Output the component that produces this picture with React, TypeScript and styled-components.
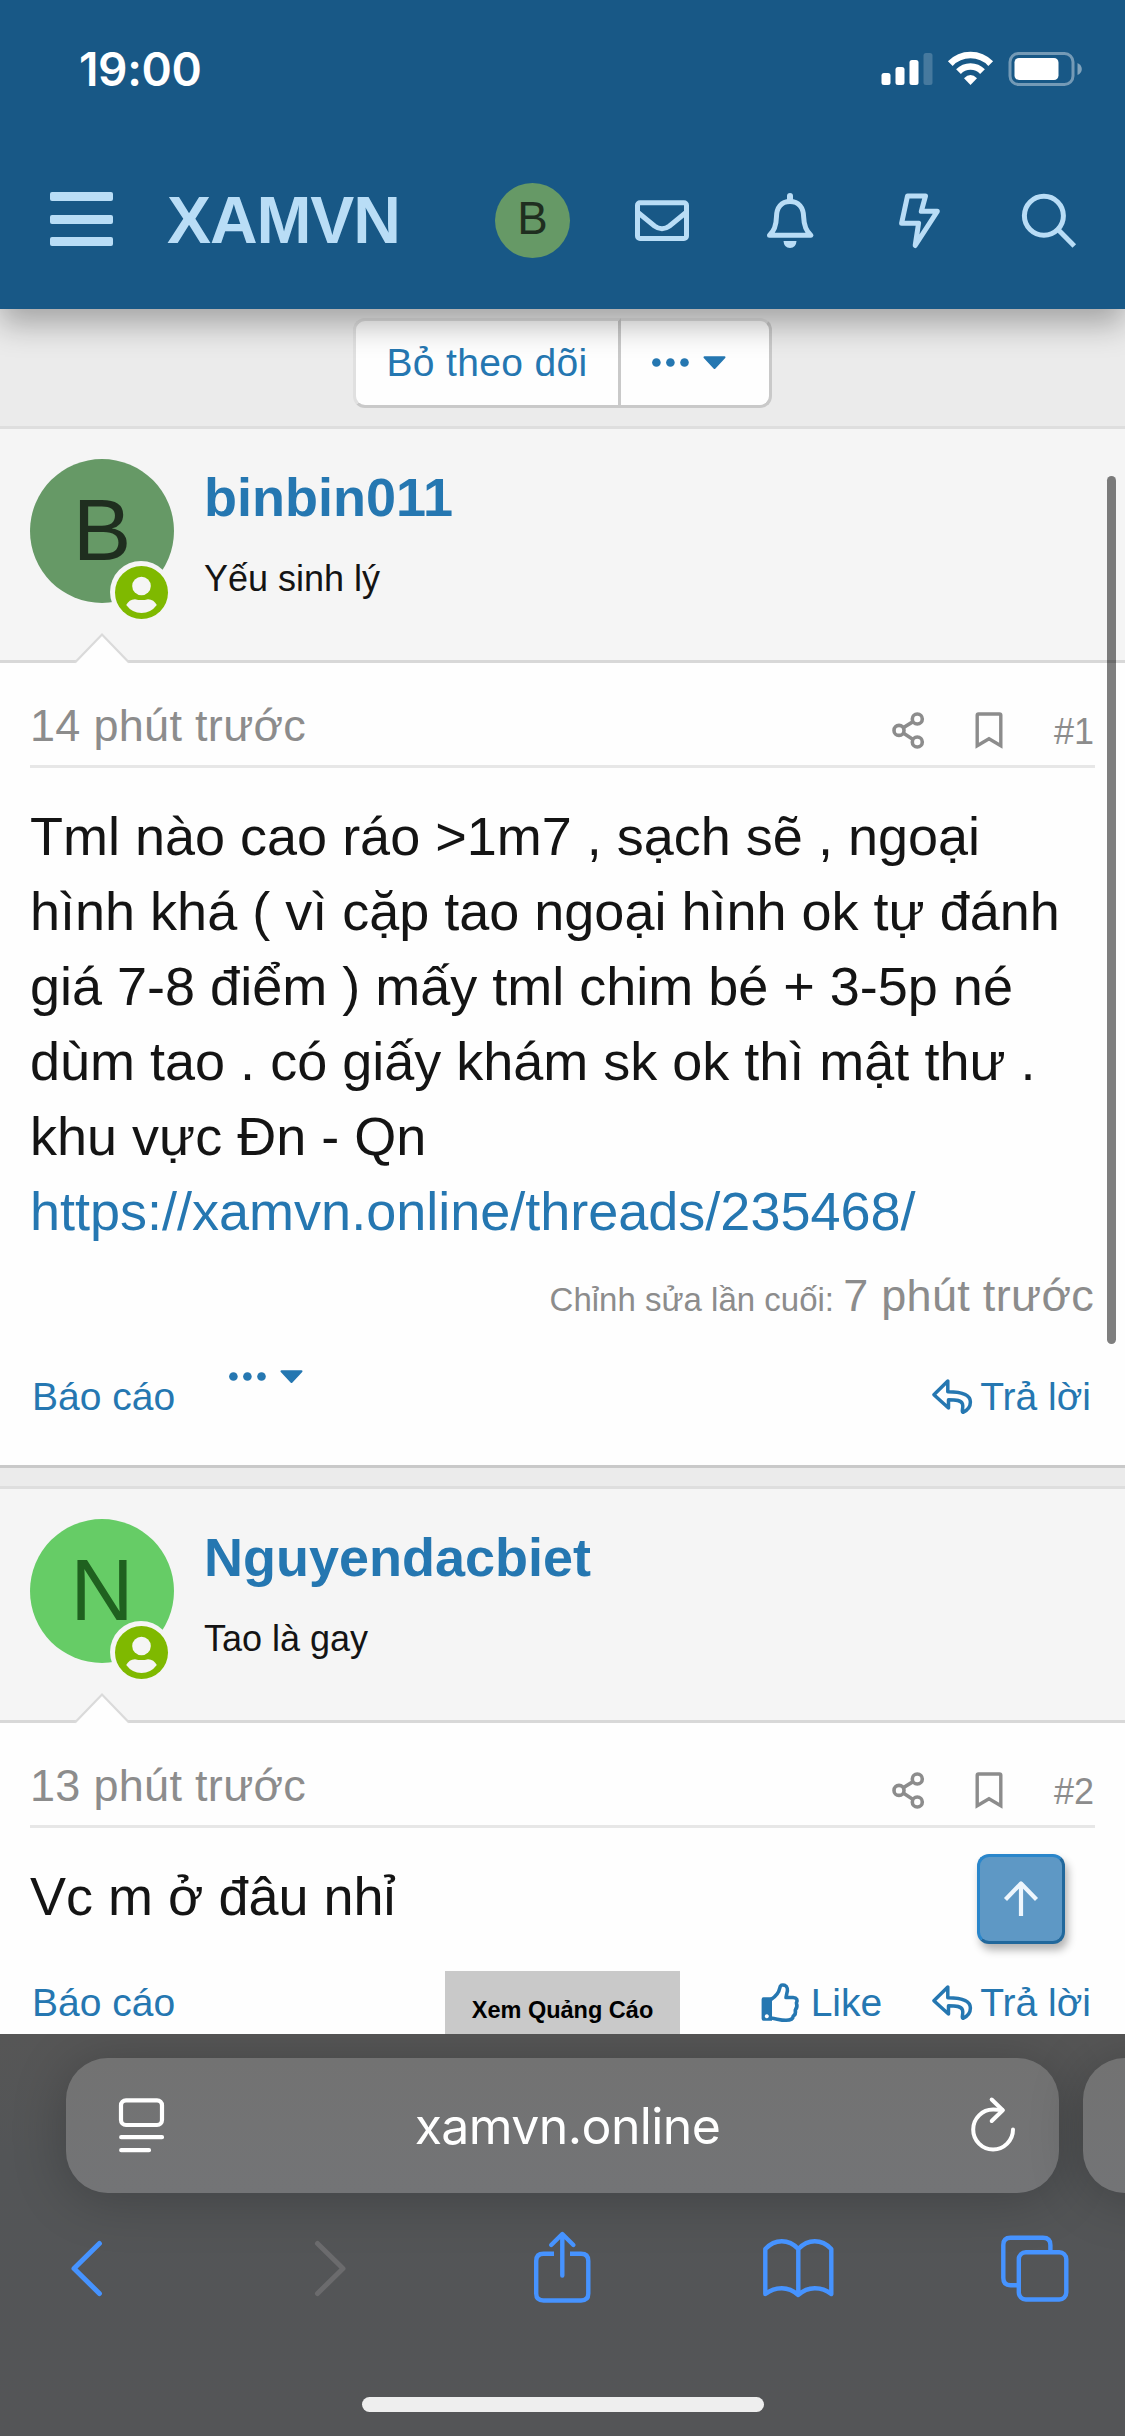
import React from "react";
import styled, { createGlobalStyle } from "styled-components";

const GlobalStyle = createGlobalStyle`
  html, body { margin: 0; padding: 0; }
  body { font-family: "Liberation Sans", Arial, sans-serif; background: #ebebeb; }
  *, *::before, *::after { box-sizing: border-box; }
  svg { display: block; flex: none; overflow: visible; }
`;

const LINK = "#2577b1";
const MUTED = "#8c8c8c";
const PALE = "#b9ddf6";
const IOS_BLUE = "#4693ff";

const Screen = styled.div`
  width: 1125px;
  height: 2436px;
  display: flex;
  flex-direction: column;
  overflow: hidden;
`;

/* ---------- site header ---------- */
const Header = styled.header`
  position: relative;
  z-index: 3;
  height: 309px;
  flex: none;
  background: #185886;
  box-shadow: 0 15px 30px rgba(0, 0, 0, 0.3);
`;

const StatusBar = styled.div`
  height: 138px;
  display: flex;
  justify-content: space-between;
  align-items: center;
  padding: 0 43px 0 79px;
`;

const Clock = styled.span`
  font: 600 46px/54px Inter, "Liberation Sans", sans-serif;
  letter-spacing: -0.35px;
  color: #fff;
`;

const NavBar = styled.nav`
  height: 171px;
  display: flex;
  align-items: flex-start;
  padding: 45px 12px 0 50px;
`;

const Burger = styled.button`
  width: 63px;
  height: 54px;
  margin-top: 9px;
  padding: 0;
  border: 0;
  background: none;
  display: flex;
  flex-direction: column;
  justify-content: space-between;
`;

const BurgerBar = styled.span`
  width: 63px;
  height: 9px;
  border-radius: 2px;
  background: ${PALE};
`;

const Logo = styled.a`
  margin-left: 54px;
  font-size: 66px;
  line-height: 75px;
  font-weight: 700;
  letter-spacing: -1.1px;
  color: ${PALE};
`;

const NavIcons = styled.div`
  display: grid;
  grid-template-columns: repeat(5, 129px);
  margin-left: auto;
`;

const NavSlot = styled.a`
  height: 75px;
  display: flex;
  align-items: center;
  justify-content: center;
`;

const Avatar = styled.span<{ $size: number; $bg: string; $fg: string }>`
  width: ${(p) => p.$size}px;
  height: ${(p) => p.$size}px;
  border-radius: 50%;
  background: ${(p) => p.$bg};
  color: ${(p) => p.$fg};
  font-size: ${(p) => p.$size * 0.61}px;
  line-height: ${(p) => p.$size - 3}px;
  text-align: center;
  flex: none;
`;

/* ---------- thread ---------- */
const Thread = styled.main`
  position: relative;
  flex: 1;
  min-height: 0;
  overflow: hidden;
  background: #ebebeb;
`;

const Actions = styled.div`
  height: 117px;
  padding: 9px 0 0 353px;
  display: flex;
`;

const ActionButton = styled.button<{ $width: number; $side: "left" | "right" }>`
  width: ${(p) => p.$width}px;
  height: 90px;
  padding: 0 ${(p) => (p.$side === "left" ? 0 : 12)}px 0 0;
  border: 3px solid;
  border-color: #e0e0e0 #c9c9c9 #c9c9c9 #e0e0e0;
  border-left-width: ${(p) => (p.$side === "left" ? 3 : 0)}px;
  border-radius: ${(p) => (p.$side === "left" ? "12px 0 0 12px" : "0 12px 12px 0")};
  background: #fefefe;
  color: ${LINK};
  font: 39px/84px "Liberation Sans", Arial, sans-serif;
  letter-spacing: 0.35px;
  display: flex;
  align-items: center;
  justify-content: center;
`;

const Post = styled.article`
  border-top: 3px solid #dedede;
  border-bottom: 3px solid #c9c9c9;
  margin-bottom: 18px;
  background: #fefefe;
`;

const UserCell = styled.section`
  position: relative;
  height: 234px;
  display: flex;
  gap: 30px;
  padding: 30px 30px 0;
  background: #f5f5f5;
  border-bottom: 3px solid #d8d8d8;
`;

const AvatarWrap = styled.div`
  position: relative;
  width: 144px;
  height: 144px;
  display: flex;
`;

const OnlineBadge = styled.span`
  position: absolute;
  left: 80px;
  top: 102px;
  width: 62px;
  height: 62px;
  padding: 4.5px;
  border-radius: 50%;
  background: #f5f5f5;
`;

const UserText = styled.div`
  display: flex;
  flex-direction: column;
`;

const UserName = styled.h4<{ $tracking: number }>`
  margin: 7px 0 0;
  font-size: 54px;
  line-height: 63px;
  font-weight: 700;
  letter-spacing: ${(p) => p.$tracking}px;
  color: ${LINK};
`;

const UserTitle = styled.h5<{ $tracking: number }>`
  margin: 24px 0 0;
  font-size: 36px;
  line-height: 51px;
  font-weight: 400;
  letter-spacing: ${(p) => p.$tracking}px;
  color: #141414;
`;

const Notch = styled.span`
  position: absolute;
  left: 72px;
  bottom: -3px;
`;

const Attribution = styled.header`
  height: 105px;
  margin: 0 30px;
  border-bottom: 3px solid #e7e7e7;
  display: flex;
  align-items: flex-start;
  color: ${MUTED};
`;

const PostTime = styled.time`
  margin-top: 16px;
  font-size: 45px;
  line-height: 93px;
  letter-spacing: 0.3px;
`;

const PostTools = styled.div`
  margin: 49px 0 0 auto;
  display: flex;
  align-items: flex-start;
`;

const ToolIcon = styled.a<{ $width: number }>`
  width: ${(p) => p.$width}px;
`;

const PostNumber = styled.a`
  width: 41px;
  font-size: 36px;
  line-height: 39px;
`;

const Message = styled.div`
  padding: 31px 0 0 30px;
  font-size: 54px;
  line-height: 75px;
  color: #141414;
`;

const Line = styled.div<{ $tracking?: number }>`
  white-space: nowrap;
  letter-spacing: ${(p) => p.$tracking ?? 0}px;
`;

const Link = styled.a`
  color: ${LINK};
`;

const LastEdit = styled.div`
  margin: 17px 31px 0 0;
  height: 60px;
  line-height: 60px;
  text-align: right;
  font-size: 33px;
  color: ${MUTED};
`;

const EditTime = styled.time`
  font-size: 45px;
  letter-spacing: 0.3px;
`;

const PostFooter = styled.footer<{ $gap: number }>`
  margin-top: ${(p) => p.$gap}px;
  height: 95px;
  padding: 0 34px 0 32px;
  display: flex;
  align-items: flex-start;
  font-size: 39px;
  line-height: 54px;
  color: ${LINK};
`;

const FooterLink = styled.a<{ $indent?: number; $gap?: number }>`
  display: flex;
  align-items: center;
  margin-left: ${(p) => p.$indent ?? 0}px;
  gap: ${(p) => p.$gap ?? 0}px;
`;

const FooterRight = styled.div`
  display: flex;
  gap: 50px;
  margin-left: auto;
`;

const ScrollThumb = styled.div`
  position: absolute;
  right: 9px;
  top: 167px;
  width: 9px;
  height: 868px;
  border-radius: 5px;
  background: rgba(0, 0, 0, 0.5);
`;

const AdButton = styled.button`
  position: absolute;
  left: 445px;
  bottom: 0;
  width: 235px;
  height: 63px;
  padding: 14px 0 0;
  border: 0;
  background: #c9c9c9;
  color: #000;
  font: 700 23.5px/50px "Liberation Sans", Arial, sans-serif;
  text-align: center;
  white-space: nowrap;
`;

const TopButton = styled.button`
  position: absolute;
  left: 977px;
  top: 1545px;
  width: 88px;
  height: 90px;
  padding: 0;
  display: flex;
  align-items: center;
  justify-content: center;
  background: #5e98c5;
  border: 3px solid;
  border-color: #2a86cb #21689c #21689c #2a86cb;
  border-radius: 12px;
  box-shadow: 3px 6px 9px rgba(0, 0, 0, 0.3);
`;

/* ---------- browser chrome ---------- */
const Chrome = styled.footer`
  position: relative;
  z-index: 4;
  height: 402px;
  flex: none;
  background: linear-gradient(#565656, #535557 30%, #545557);
  overflow: hidden;
`;

const TabStrip = styled.div`
  width: 1300px;
  height: 159px;
  padding: 24px 0 0 66px;
  display: flex;
  gap: 24px;
`;

const TabPill = styled.div<{ $width: number }>`
  width: ${(p) => p.$width}px;
  height: 135px;
  border-radius: 42px;
  padding: 0 43px 0 53px;
  background: linear-gradient(#727272, #737476);
  box-shadow: 0 6px 54px rgba(0, 0, 0, 0.22);
  display: flex;
  align-items: center;
  justify-content: space-between;
`;

const Host = styled.span`
  font: 400 50px/60px Inter, "Liberation Sans", sans-serif;
  letter-spacing: -0.6px;
  color: #fff;
`;

const Toolbar = styled.div`
  display: grid;
  grid-template-columns: 244px 219px 229px 238px 68px;
  align-items: center;
  height: 146px;
  padding: 4px 0 0 71px;
`;

const HomeIndicator = styled.div`
  width: 402px;
  height: 15px;
  margin: 58px auto 0;
  border-radius: 8px;
  background: #eee;
`;

const BADGE_GREEN = "#7fb900";

const DotsCaret = () => (
  <svg width="75" height="14" viewBox="0 0 75 14" fill="currentColor">
    <circle cx="4.4" cy="6.5" r="4.3" />
    <circle cx="18.4" cy="6.5" r="4.3" />
    <circle cx="32.5" cy="6.5" r="4.3" />
    <path d="M52.5 1.2h20L62.5 12z" stroke="currentColor" strokeWidth="2" strokeLinejoin="round" />
  </svg>
);

const PersonBadge = () => (
  <svg width="53" height="53" viewBox="0 0 53 53">
    <circle cx="26.5" cy="26.5" r="26.5" fill={BADGE_GREEN} />
    <circle cx="26.5" cy="20" r="9.3" fill="#f5f5f5" />
    <path d="M20 33.2q6.5 1.8 13 0 6 .3 8.8 5.8-6 8-15.3 8t-15.3-8q2.800-5.500 8.800-5.800z" fill="#f5f5f5" />
  </svg>
);

const NotchShape = () => (
  <svg width="60" height="30" viewBox="0 0 60 30">
    <path d="M3 30 30 2l27 28z" fill="#fefefe" />
    <path d="M3 29.500 30 1.500l27 28" fill="none" stroke="#dadada" strokeWidth="2.200" />
  </svg>
);

const ReplyIcon = () => (
  <svg width="40" height="36" viewBox="935 1380 40 36" fill="none" stroke="currentColor" strokeWidth="3.500" strokeLinejoin="round">
    <path d="M950.800 1382V1392.700C965 1392.700 973.400 1395.500 973.400 1403C973.400 1408 970 1411.500 966 1413.300C964 1412.500 966.800 1409 965.500 1405C964.300 1401.300 960 1400.700 951.500 1400.700V1409L936.900 1395.700Z" />
  </svg>
);

const LikeIcon = () => (
  <svg width="38" height="40" viewBox="763 1983 38 40">
    <path fillRule="evenodd" fill="currentColor" d="M765.500 1997.300H774V2020.700H765.500Q763.600 2020.700 763.600 2018.500V1999.500Q763.600 1997.300 765.500 1997.300ZM768.800 2014.200a2 2 0 1 0 .01 0Z" />
    <path fill="none" stroke="currentColor" strokeWidth="3.600" strokeLinejoin="round" d="M773 1999.500C779 1995.500 781 1992 781.600 1988.500C782.200 1984.800 784.400 1984.600 786.500 1985.200C789.500 1986.400 790 1990 788.800 1993.500L788 1997.500H795C799 1997.700 799.900 2000.500 798.400 2003C799.500 2006 798.700 2008.500 797.300 2010C797.900 2013 797 2015 795.300 2016C795 2019 793 2020.300 788 2020.300C782 2020.300 779 2018.700 773 2018" />
  </svg>
);

const Reply = () => (
  <FooterLink $gap={8}>
    <ReplyIcon />
    <span>Trả lời</span>
  </FooterLink>
);

interface PostProps {
  letter: string;
  bg: string;
  fg: string;
  name: string;
  nameTracking: number;
  title: string;
  titleTracking: number;
  time: string;
  index: number;
  children: React.ReactNode;
}

const PostItem = ({ letter, bg, fg, name, nameTracking, title, titleTracking, time, index, children }: PostProps) => (
  <Post>
    <UserCell>
      <AvatarWrap>
        <Avatar $size={144} $bg={bg} $fg={fg}>{letter}</Avatar>
        <OnlineBadge><PersonBadge /></OnlineBadge>
      </AvatarWrap>
      <UserText>
        <UserName $tracking={nameTracking}>{name}</UserName>
        <UserTitle $tracking={titleTracking}>{title}</UserTitle>
      </UserText>
      <Notch><NotchShape /></Notch>
    </UserCell>
    <Attribution>
      <PostTime>{time}</PostTime>
      <PostTools>
        <ToolIcon $width={83}>
          <svg width="33" height="37" viewBox="892.500 712 33 37" fill="none" stroke="currentColor" strokeWidth="3.600">
            <circle cx="917.800" cy="719" r="5" />
            <circle cx="899.500" cy="730.400" r="5" />
            <circle cx="917.800" cy="742" r="5" />
            <path d="M903.700 727.800 913.600 721.600M903.700 733 913.600 739.400" />
          </svg>
        </ToolIcon>
        <ToolIcon $width={79}>
          <svg width="28" height="37" viewBox="975.500 712 28 37" fill="none" stroke="currentColor" strokeWidth="3.400">
            <path d="M977.700 745.700V715.300Q977.700 714 979 714H1000Q1001.300 714 1001.300 715.300V745.700L989.500 738.800Z" />
          </svg>
        </ToolIcon>
        <PostNumber>#{index}</PostNumber>
      </PostTools>
    </Attribution>
    {children}
  </Post>
);

export default function App() {
  return (
    <Screen>
      <GlobalStyle />
      <Header>
        <StatusBar>
          <Clock>19:00</Clock>
          <svg width="201" height="34" viewBox="881.500 52 201 34" fill="#fff">
            <rect x="882" y="73" width="9" height="12" rx="2.500" />
            <rect x="896" y="67" width="9" height="18" rx="2.500" />
            <rect x="910" y="60" width="9" height="25" rx="2.500" />
            <rect x="924" y="53" width="9" height="32" rx="2.500" opacity=".2" />
            <g fill="none" stroke="#fff" strokeWidth="6.600">
              <path d="M950.800 63.600A28 28 0 0 1 991.200 63.600" />
              <path d="M959 71.600A16.700 16.700 0 0 1 983 71.600" />
            </g>
            <path d="M971 85 964.500 78.200Q971 72 977.500 78.200Z" />
            <rect x="1010.500" y="53.500" width="63" height="31" rx="8.500" fill="none" stroke="#fff" strokeWidth="3" opacity=".4" />
            <rect x="1015" y="58" width="44" height="22" rx="4.500" />
            <path d="M1078 63Q1082.300 65 1082.300 69T1078 75Z" opacity=".45" />
          </svg>
        </StatusBar>
        <NavBar>
          <Burger aria-label="Menu">
            <BurgerBar />
            <BurgerBar />
            <BurgerBar />
          </Burger>
          <Logo>XAMVN</Logo>
          <NavIcons>
            <NavSlot><Avatar $size={75} $bg="#669966" $fg="#1f2e1f">B</Avatar></NavSlot>
            <NavSlot>
              <svg width="54" height="55" viewBox="635 192 54 55" fill="none" stroke={PALE} strokeWidth="5">
                <rect x="637.500" y="201.800" width="49" height="35.700" rx="2.500" />
                <path d="M638 211.500 654.500 225Q662 230.500 669.500 225L686 211.500" />
              </svg>
            </NavSlot>
            <NavSlot>
              <svg width="50" height="55" viewBox="764.500 192 50 55" fill="none" stroke={PALE} strokeWidth="5" strokeLinejoin="round">
                <path d="M768 234.300Q774.700 228 774.900 216.500C775 206 780 200.500 788.500 200.500S802 206 802.200 216.500Q802.500 228 809.400 234.300Z" />
                <path d="M788.500 195V200" strokeWidth="6" strokeLinecap="round" />
                <path d="M782 240H795Q794.500 247 788.500 247T782 240Z" fill={PALE} stroke="none" />
              </svg>
            </NavSlot>
            <NavSlot>
              <svg width="42" height="55" viewBox="898 192 42 55" fill="none" stroke={PALE} strokeWidth="5" strokeLinejoin="round">
                <path d="M906.500 195H924.500L920.300 210.300H936.300L914.200 244.500L917.600 222.200H900.600Z" />
              </svg>
            </NavSlot>
            <NavSlot>
              <svg width="54" height="55" viewBox="1021 192 54 55" fill="none" stroke={PALE} strokeWidth="5">
                <circle cx="1042.900" cy="214.700" r="19.500" />
                <path d="M1057.500 229 1073.300 245" />
              </svg>
            </NavSlot>
          </NavIcons>
        </NavBar>
      </Header>

      <Thread>
        <Actions>
          <ActionButton $width={268} $side="left">Bỏ theo dõi</ActionButton>
          <ActionButton $width={151} $side="right"><DotsCaret /></ActionButton>
        </Actions>

        <PostItem letter="B" bg="#669966" fg="#1f2e1f" name="binbin011" nameTracking={0} title="Yếu sinh lý" titleTracking={0} time="14 phút trước" index={1}>
          <Message>
            <Line>Tml nào cao ráo &gt;1m7 , sạch sẽ , ngoại</Line>
            <Line>hình khá ( vì cặp tao ngoại hình ok tự đánh</Line>
            <Line>giá 7-8 điểm ) mấy tml chim bé + 3-5p né</Line>
            <Line>dùm tao . có giấy khám sk ok thì mật thư .</Line>
            <Line>khu vực Đn - Qn</Line>
            <Line><Link>https://xamvn.online/threads/235468/</Link></Line>
          </Message>
          <LastEdit>Chỉnh sửa lần cuối: <EditTime>7 phút trước</EditTime></LastEdit>
          <PostFooter $gap={44}>
            <FooterLink>Báo cáo</FooterLink>
            <FooterLink $indent={54}><DotsCaret /></FooterLink>
            <FooterRight><Reply /></FooterRight>
          </PostFooter>
        </PostItem>

        <PostItem letter="N" bg="#66cc66" fg="#1f611f" name="Nguyendacbiet" nameTracking={0} title="Tao là gay" titleTracking={0} time="13 phút trước" index={2}>
          <Message>
            <Line>Vc m ở đâu nhỉ</Line>
          </Message>
          <PostFooter $gap={42}>
            <FooterLink>Báo cáo</FooterLink>
            <FooterRight>
              <FooterLink $gap={12}><LikeIcon /><span>Like</span></FooterLink>
              <Reply />
            </FooterRight>
          </PostFooter>
        </PostItem>

        <ScrollThumb />
        <TopButton aria-label="Top">
          <svg width="36" height="36" viewBox="1002 1882 36 36" fill="none" stroke="#eef6fd" strokeWidth="4.200" strokeLinejoin="round">
            <path d="M1004.500 1900.500 1020 1884.500 1035.500 1900.500M1020 1885V1917" />
          </svg>
        </TopButton>
        <AdButton>Xem Quảng Cáo</AdButton>
      </Thread>

      <Chrome>
        <TabStrip>
          <TabPill $width={993}>
            <svg width="45" height="55" viewBox="119 2099 45 55" fill="none" stroke="#fff" strokeWidth="4.200">
              <rect x="121" y="2101.300" width="41" height="24.700" rx="5" />
              <path d="M121.200 2138.200H162M121.200 2151.200H149" strokeLinecap="round" />
            </svg>
            <Host>xamvn.online</Host>
            <svg width="45" height="66" viewBox="971 2092 45 66" fill="none" stroke="#fff" strokeWidth="4" strokeLinecap="round" strokeLinejoin="round">
              <path d="M1013 2128.500A19.900 19.900 0 1 1 993.200 2108.600Q998 2108.600 1002.500 2109.200" />
              <path d="M991.700 2098.500 1002.800 2109.200 991.700 2120" />
            </svg>
          </TabPill>
          <TabPill $width={200} />
        </TabStrip>
        <Toolbar>
          <svg width="31" height="55" viewBox="71 2240.500 31 55" fill="none" stroke={IOS_BLUE} strokeWidth="5" strokeLinecap="round" strokeLinejoin="round">
            <path d="M99.400 2243 74 2268 99.400 2293" />
          </svg>
          <svg width="31" height="55" viewBox="315 2240.500 31 55" fill="none" stroke="#6b6b6d" strokeWidth="5" strokeLinecap="round" strokeLinejoin="round">
            <path d="M317.500 2243 343 2268 317.500 2293" />
          </svg>
          <svg width="57" height="71" viewBox="534 2232.500 57 71" fill="none" stroke={IOS_BLUE} strokeWidth="4.400">
            <path d="M554 2253.300H543.500Q536.200 2253.300 536.200 2260.500V2293Q536.200 2300 543.500 2300H581Q588.300 2300 588.300 2293V2260.500Q588.300 2253.300 581 2253.300H570" />
            <path d="M562.300 2275V2234M551.200 2244.500 562.300 2233.500 573.400 2244.500" strokeLinecap="round" strokeLinejoin="round" />
          </svg>
          <svg width="71" height="59" viewBox="763 2238.500 71 59" fill="none" stroke={IOS_BLUE} strokeWidth="4.400" strokeLinejoin="round">
            <path d="M798.300 2248.500Q791 2240.800 781.800 2240.800T765.300 2248.500V2293.500Q773 2287.700 781.800 2287.700T798.300 2294.500Q805.500 2287.700 814.800 2287.700T831.300 2293.500V2248.500Q824 2240.800 814.800 2240.800T798.300 2248.500V2294.500" />
          </svg>
          <svg width="68" height="67" viewBox="1001 2234.500 68 67" fill="none" stroke={IOS_BLUE} strokeWidth="4.400">
            <rect x="1018.800" y="2251.700" width="47.500" height="47.300" rx="7" />
            <path d="M1018 2284.700H1010.500Q1003.300 2284.700 1003.300 2277.500V2244.500Q1003.300 2237.200 1010.500 2237.200H1043Q1050.400 2237.200 1050.400 2244.500V2251" />
          </svg>
        </Toolbar>
        <HomeIndicator />
      </Chrome>
    </Screen>
  );
}
